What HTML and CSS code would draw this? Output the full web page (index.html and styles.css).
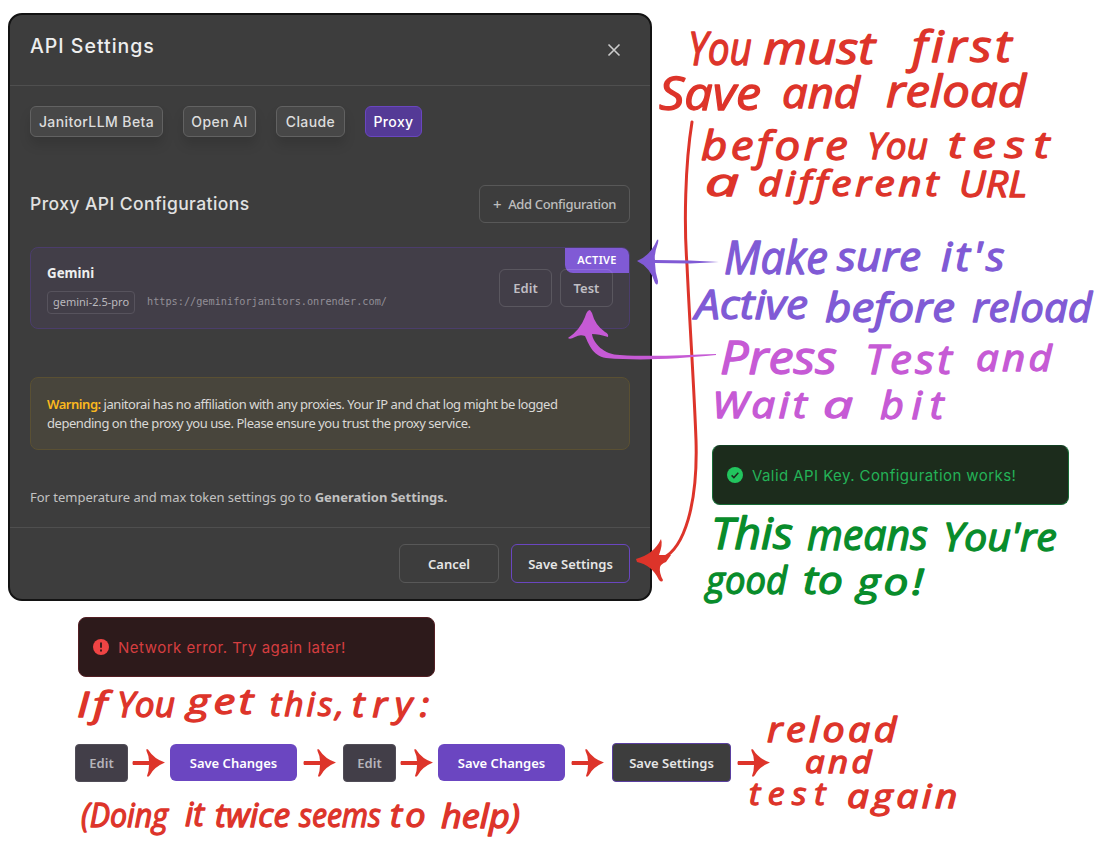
FILE: index.html
```html
<!DOCTYPE html>
<html lang="en">
<head>
<meta charset="utf-8">
<title>API Settings</title>
<link rel="stylesheet" href="styles.css">
</head>
<body>
<main class="board">
  <div class="top">
    <section class="modal">
      <header class="modal-head">
        <h1 class="title">API Settings</h1>
        <svg class="close" viewBox="0 0 14 14"><path d="M1.5 1.5l11 11M12.5 1.5l-11 11"/></svg>
      </header>
      <div class="modal-body">
        <nav class="tabs">
          <span class="tab tab-janitor">JanitorLLM Beta</span>
          <span class="tab tab-openai">Open AI</span>
          <span class="tab tab-claude">Claude</span>
          <span class="tab tab-proxy">Proxy</span>
        </nav>
        <div class="section-head">
          <h2 class="subtitle">Proxy API Configurations</h2>
          <button class="btn add"><span class="plus">+</span><span>Add Configuration</span></button>
        </div>
        <article class="config">
          <div class="config-info">
            <div class="config-name">Gemini</div>
            <div class="config-meta">
              <span class="model">gemini-2.5-pro</span>
              <span class="url">https://geminiforjanitors.onrender.com/</span>
            </div>
          </div>
          <span class="badge">ACTIVE</span>
          <div class="config-actions">
            <button class="btn small">Edit</button>
            <button class="btn small">Test</button>
          </div>
        </article>
        <div class="warning">
          <p class="warn-a"><b>Warning:</b> janitorai has no affiliation with any proxies. Your IP and chat log might be logged</p>
          <p class="warn-b">depending on the proxy you use. Please ensure you trust the proxy service.</p>
        </div>
        <p class="hint">For temperature and max token settings go to <b>Generation Settings.</b></p>
      </div>
      <footer class="modal-foot">
        <button class="btn cancel">Cancel</button>
        <button class="btn save">Save Settings</button>
      </footer>
    </section>
    <aside class="side">
      <div class="toast ok">
        <svg class="toast-icon" viewBox="0 0 16 16"><circle cx="8" cy="8" r="8" fill="#22c55e"/><path d="M4.6 8.4l2.3 2.2 4.4-4.8" fill="none" stroke="#1c2c1c" stroke-width="1.5"/></svg>
        <span>Valid API Key. Configuration works!</span>
      </div>
    </aside>
  </div>
  <div class="toast err">
    <svg class="toast-icon" viewBox="0 0 16 16"><circle cx="8" cy="8" r="8" fill="#ef4444"/><path d="M7.1 3.4h1.8v5.4H7.1zM7.1 10.6h1.8v1.8H7.1z" fill="#2d1a1b"/></svg>
    <span>Network error. Try again later!</span>
  </div>
  <div class="steps">
    <span class="step edit">Edit</span>
    <svg class="arrow a1" viewBox="0 0 33 30"><use href="#arrow"/></svg>
    <span class="step change">Save Changes</span>
    <svg class="arrow a2" viewBox="0 0 33 30"><use href="#arrow"/></svg>
    <span class="step edit">Edit</span>
    <svg class="arrow a1" viewBox="0 0 33 30"><use href="#arrow"/></svg>
    <span class="step change">Save Changes</span>
    <svg class="arrow a3" viewBox="0 0 33 30"><use href="#arrow"/></svg>
    <span class="step settings">Save Settings</span>
    <svg class="arrow a3" viewBox="0 0 33 30"><use href="#arrow"/></svg>
  </div>

  <svg class="ink" viewBox="0 0 1100 850" width="1100" height="850">
    <defs>
      <path id="arrow" d="M1 13Q0 15 1 17L17 17Q17 23 15 28Q16 30 18 27Q22 19 33 14.5Q22 11 16 1.500Q14 0 14.500 3Q17 8 17 13Z"/>
    </defs>
    <g class="red">
      <path class="line" d="M692 122C685 165 684 225 687 265C690 330 694 385 696 440C698 505 684 548 663 558" stroke-width="3"/>
      <path d="M636 559Q654 554 661 539Q663 544 659 555L671 555L666 562Q661 564 660 567Q659 573 663 580Q662 583 659 580Q652 565 637 562Z"/>
      <text x="688" y="65" font-size="46" lengthAdjust="spacingAndGlyphs" textLength="64">You</text>
      <text x="763" y="64" font-size="44" lengthAdjust="spacingAndGlyphs" textLength="112">must</text>
      <text class="loose" x="912" y="62" font-size="43" lengthAdjust="spacingAndGlyphs" textLength="103">first</text>
      <text x="659" y="110" font-size="46" lengthAdjust="spacingAndGlyphs" textLength="102">Save</text>
      <text x="782" y="108" font-size="42" lengthAdjust="spacingAndGlyphs" textLength="78">and</text>
      <text x="886" y="107" font-size="44" lengthAdjust="spacingAndGlyphs" textLength="140">reload</text>
      <text class="loose" x="701" y="160" font-size="41" lengthAdjust="spacingAndGlyphs" textLength="150">before</text>
      <text x="867" y="159" font-size="37" lengthAdjust="spacingAndGlyphs" textLength="61">You</text>
      <text class="wide" x="948" y="158" font-size="37" lengthAdjust="spacingAndGlyphs" textLength="110">test</text>
      <text x="705" y="196" font-size="38" lengthAdjust="spacingAndGlyphs" textLength="34">a</text>
      <text class="loose" x="758" y="196" font-size="34" lengthAdjust="spacingAndGlyphs" textLength="184">different</text>
      <text x="959" y="197" font-size="37" lengthAdjust="spacingAndGlyphs" textLength="68">URL</text>
      <text class="loose" x="77" y="717" font-size="35" lengthAdjust="spacingAndGlyphs" textLength="34">If</text>
      <text x="117" y="717" font-size="35" lengthAdjust="spacingAndGlyphs" textLength="58">You</text>
      <text class="loose" x="187" y="714" font-size="35" lengthAdjust="spacingAndGlyphs" textLength="70">get</text>
      <text class="loose" x="270" y="716" font-size="33" lengthAdjust="spacingAndGlyphs" textLength="77">this,</text>
      <text class="wide" x="352" y="717" font-size="35" lengthAdjust="spacingAndGlyphs" textLength="85">try:</text>
      <text x="81" y="827" font-size="32" lengthAdjust="spacingAndGlyphs" textLength="87">(Doing</text>
      <text x="185" y="826" font-size="32" lengthAdjust="spacingAndGlyphs" textLength="19">it</text>
      <text x="215" y="827" font-size="32" lengthAdjust="spacingAndGlyphs" textLength="75">twice</text>
      <text x="299" y="827" font-size="32" lengthAdjust="spacingAndGlyphs" textLength="82">seems</text>
      <text class="loose" x="390" y="827" font-size="32" lengthAdjust="spacingAndGlyphs" textLength="39">to</text>
      <text x="441" y="828" font-size="32" lengthAdjust="spacingAndGlyphs" textLength="79">help)</text>
      <text class="loose" x="767" y="742" font-size="34" lengthAdjust="spacingAndGlyphs" textLength="133">reload</text>
      <text class="loose" x="805" y="773" font-size="31" lengthAdjust="spacingAndGlyphs" textLength="70">and</text>
      <text class="wide" x="749" y="805" font-size="31" lengthAdjust="spacingAndGlyphs" textLength="84">test</text>
      <text class="loose" x="847" y="808" font-size="32" lengthAdjust="spacingAndGlyphs" textLength="114">again</text>
    </g>
    <g class="purple">
      <path d="M637 261Q650 256 657 240Q659 238 658 243Q654 254 655 260L690 260.500L719 262L690 263.500L655 263Q655 272 658 281Q658 287 655 283Q650 267 637 261Z"/>
      <text x="724" y="274" font-size="46" lengthAdjust="spacingAndGlyphs" textLength="104">Make</text>
      <text x="837" y="271" font-size="40" lengthAdjust="spacingAndGlyphs" textLength="84">sure</text>
      <text class="loose" x="941" y="271" font-size="40" lengthAdjust="spacingAndGlyphs" textLength="67">it's</text>
      <text x="695" y="319" font-size="41" lengthAdjust="spacingAndGlyphs" textLength="113">Active</text>
      <text x="825" y="322" font-size="40" lengthAdjust="spacingAndGlyphs" textLength="130">before</text>
      <text x="972" y="322" font-size="41" lengthAdjust="spacingAndGlyphs" textLength="120">reload</text>
    </g>
    <g class="pink">
      <path d="M590 310Q587 310 585 317Q580 330 568 338Q570 340 575 337Q580 334 585 336C588 342 592 356 606 358C640 361 675 359 716 355L716 354C685 355 650 357 620 355C604 355 593 343 592 334Q599 334 608 337Q609 334 605 332Q595 325 592 313Z"/>
      <text x="720" y="374" font-size="45" lengthAdjust="spacingAndGlyphs" textLength="117">Press</text>
      <text class="loose" x="865" y="374" font-size="41" lengthAdjust="spacingAndGlyphs" textLength="90">Test</text>
      <text class="loose" x="976" y="371" font-size="37" lengthAdjust="spacingAndGlyphs" textLength="79">and</text>
      <text class="loose" x="712" y="418" font-size="37" lengthAdjust="spacingAndGlyphs" textLength="98">Wait</text>
      <text x="823" y="418" font-size="37" lengthAdjust="spacingAndGlyphs" textLength="30">a</text>
      <text class="wide" x="880" y="419" font-size="38" lengthAdjust="spacingAndGlyphs" textLength="71">bit</text>
    </g>
    <g class="green">
      <text x="711" y="549" font-size="43" lengthAdjust="spacingAndGlyphs" textLength="82">This</text>
      <text x="807" y="550" font-size="42" lengthAdjust="spacingAndGlyphs" textLength="121">means</text>
      <text x="943" y="551" font-size="39" lengthAdjust="spacingAndGlyphs" textLength="114">You're</text>
      <text x="706" y="594" font-size="38" lengthAdjust="spacingAndGlyphs" textLength="81">good</text>
      <text x="803" y="594" font-size="38" lengthAdjust="spacingAndGlyphs" textLength="40">to</text>
      <text class="loose" x="857" y="595" font-size="37" lengthAdjust="spacingAndGlyphs" textLength="70">go!</text>
    </g>
  </svg>
</main>
</body>
</html>
```
FILE: styles.css
```css
* { box-sizing: border-box; }
body { margin: 0; background: #fff; font-family: "Noto Sans", sans-serif; }
h1, h2, p { margin: 0; }
.board { position: relative; width: 1100px; height: 850px; padding: 13px 0 0 8px; overflow: hidden; background: #fff; }
.top { display: flex; }
.modal { width: 644px; height: 588px; border: 2px solid #131313; border-radius: 14px; background: #3d3d3d; color: #e6e6e6; display: flex; flex-direction: column; }
.modal-head { height: 71px; border-bottom: 1px solid #4f4f4f; display: flex; justify-content: space-between; padding: 0 29px 0 20px; }
.title { font: 500 19.500px/25px Inter, sans-serif; padding-top: 19px; letter-spacing: 1px; color: #eee; }
.close { width: 14px; height: 14px; margin-top: 28px; fill: none; stroke: #ccc; stroke-width: 1.600; }
.modal-body { height: 442px; padding: 20px 20px 0; border-bottom: 1px solid #4f4f4f; }
.tabs { display: flex; gap: 20px; }
.tab { height: 31px; border: 1px solid #626262; border-radius: 6px; background: #474747; box-shadow: 0 8px 12px rgba(0,0,0,.12); font: 500 14px/30px Inter, sans-serif; letter-spacing: .4px; text-align: center; white-space: nowrap; color: #ddd; }
.tab-janitor { width: 133px; }
.tab-openai { width: 73px; }
.tab-claude { width: 69px; }
.tab-proxy { width: 57px; background: #543a96; border-color: #6a46c0; color: #fff; box-shadow: none; }
.section-head { display: flex; justify-content: space-between; align-items: center; margin-top: 48px; height: 38px; }
.subtitle { font: 500 17.500px/24px Inter, sans-serif; letter-spacing: .43px; color: #e2e2e2; white-space: nowrap; }
.btn { display: flex; align-items: center; justify-content: center; padding: 0; border: 1px solid #585858; border-radius: 6px; background: transparent; font: 600 13px "Noto Sans", sans-serif; color: #e6e6e6; white-space: nowrap; }
.add { width: 151px; height: 38px; gap: 7px; font-weight: 500; color: #bdbdbd; letter-spacing: -.36px; }
.plus { font-size: 15px; }
.config { position: relative; display: flex; justify-content: space-between; height: 82px; margin-top: 24px; padding: 15px 16px 0; border: 1px solid #4b3d6c; border-radius: 8px; background: #423e48; }
.config-name { font: 700 13.300px/20px "Noto Sans", sans-serif; color: #eee; }
.config-meta { display: flex; align-items: center; gap: 12px; margin-top: 8px; height: 23px; }
.model { width: 88px; height: 23px; border: 1px solid #57535d; border-radius: 4px; font-size: 11px; line-height: 20px; text-align: center; color: #bbb9be; white-space: nowrap; }
.url { font: 10.220px/20px "DejaVu Sans Mono", monospace; padding-bottom: 2px; color: #928f97; white-space: nowrap; }
.config-actions { position: relative; display: flex; gap: 8px; padding-top: 6px; }
.small { width: 53px; height: 38px; border-color: rgba(255,255,255,.13); color: #c0bec4; }
.badge { position: absolute; top: 0; right: 0; width: 64px; height: 25px; border-radius: 0 7px 0 8px; background: #805ad5; color: #fff; font: 600 11px/24px "Noto Sans", sans-serif; text-align: center; letter-spacing: .3px; }
.warning { height: 73px; margin-top: 48px; padding: 17px 16px; border: 1px solid #5a5033; border-radius: 8px; background: #48453c; font-size: 13px; line-height: 19px; color: #dad9d6; white-space: nowrap; }
.warning b { color: #fbb91e; font-weight: 600; }
.warn-a, .warn-b { letter-spacing: -.46px; }
.hint { margin-top: 37px; font-size: 13px; line-height: 20px; color: #c2c2c2; letter-spacing: -.02px; white-space: nowrap; }
.modal-foot { display: flex; justify-content: flex-end; gap: 12px; padding: 16px 20px 0; }
.cancel { width: 100px; height: 39px; }
.save { width: 119px; height: 39px; border-color: #6a46c0; }
.side { padding: 432px 0 0 60px; }
.toast { width: 357px; height: 60px; display: flex; align-items: center; gap: 9px; padding: 0 14px; border-radius: 8px; font: 400 15px Inter, sans-serif; letter-spacing: .43px; white-space: nowrap; }
.toast-icon { width: 16px; height: 16px; }
.ok { border: 1px solid #176b36; border-top-color: #123f23; background: #1c2c1c; color: #24b257; }
.err { margin: 16px 0 0 70px; border: 1px solid #541f24; background: #2d1a1b; color: #d53e40; letter-spacing: .5px; }
.steps { display: flex; align-items: center; margin: 66px 0 0 67px; height: 39px; }
.step { display: flex; flex: none; align-items: center; justify-content: center; font-size: 13px; font-weight: 600; border-radius: 4px; white-space: nowrap; }
.edit { width: 53px; height: 38px; background: #423e48; border: 1px solid #514d57; color: #b6b4ba; }
.change { width: 127px; height: 37px; border-radius: 6px; background: #6b46c1; color: #fff; }
.settings { width: 119px; height: 39px; background: #3d3d3d; border: 1px solid #5a3fa0; color: #e6e6e6; }
.arrow { width: 33px; height: 30px; flex: none; fill: #dd342a; }
.a1 { margin: 0 5px 0 4px; }
.a2 { margin: 0 7px 0 6px; }
.a3 { margin: 0 8px 0 6px; }
.ink { position: absolute; left: 0; top: 0; pointer-events: none; }
.ink text { font-family: "Open Sans", sans-serif; font-style: italic; font-weight: 400; stroke: currentColor; stroke-width: 1.300; stroke-linejoin: round; }
.ink .loose { letter-spacing: 3px; }
.ink .wide { letter-spacing: 7px; }
.ink g { fill: currentColor; }
.ink .line { fill: none; stroke: currentColor; stroke-linecap: round; }
.red { color: #dd342a; }
.purple { color: #805ad5; }
.pink { color: #c65ad5; }
.green { color: #088c2b; }
```
